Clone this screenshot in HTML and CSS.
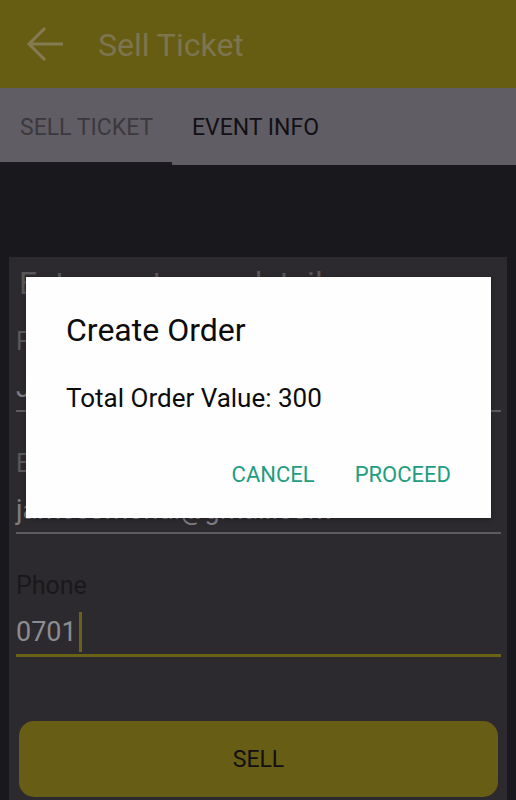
FILE: index.html
```html
<!DOCTYPE html>
<html>
<head>
<meta charset="utf-8">
<link rel="stylesheet" href="styles.css">
</head>
<body>
<div class="screen">
  <header class="appbar">
    <svg class="back" width="40" height="40" viewBox="0 0 40 40">
      <path d="M38 20H5M20 4L4 20L20 36" fill="none" stroke="#857b52" stroke-width="3" stroke-linejoin="miter"/>
    </svg>
    <div class="title">Sell Ticket</div>
  </header>
  <nav class="tabs">
    <div class="tab active">SELL TICKET</div>
    <div class="tab">EVENT INFO</div>
  </nav>
  <main class="content">
    <section class="card">
      <div class="hint">Enter customer details</div>
      <div class="field">
        <div class="label">First Name</div>
        <div class="value">James</div>
      </div>
      <div class="field">
        <div class="label">Email</div>
        <div class="value">jamesomondi@gmail.com</div>
      </div>
      <div class="field focused">
        <div class="label dark">Phone</div>
        <div class="value">0701<span class="cursor"></span></div>
      </div>
      <button class="sell">SELL</button>
    </section>
  </main>

  <div class="dialog">
    <div class="d-title">Create Order</div>
    <div class="d-body">Total Order Value: 300</div>
    <div class="d-actions">
      <span class="d-btn">CANCEL</span>
      <span class="d-btn">PROCEED</span>
    </div>
  </div>
</div>
</body>
</html>
```
FILE: styles.css
```css
* { box-sizing: border-box; }
html, body { margin: 0; padding: 0; }
body {
  width: 516px;
  height: 800px;
  overflow: hidden;
  background: #19181c;
  font-family: Roboto, "Liberation Sans", sans-serif;
}
.screen {
  position: relative;
  width: 516px;
  height: 800px;
  display: flex;
  flex-direction: column;
}
.appbar {
  flex-shrink: 0;
  height: 88px;
  background: #665c12;
  display: flex;
  align-items: center;
  padding-left: 25px;
}
.back { display: block; margin-top: 0; }
.title {
  margin-left: 33px;
  font-size: 32px;
  color: #7d7550;
  margin-top: 2px;
}
.tabs {
  flex-shrink: 0;
  height: 77px;
  background: #615d64;
  display: flex;
}
.tab {
  font-size: 23px;
  color: #121014;
  display: flex;
  align-items: center;
  padding: 0 20px;
  padding-top: 2px;
  white-space: nowrap;
}
.tab.active {
  width: 172px;
  color: #3b393d;
  border-bottom: 3px solid #1c1a1e;
  padding-top: 5px;
}
.content {
  flex: 1;
  min-height: 0;
  padding: 92px 9px 0 9px;
  display: flex;
  flex-direction: column;
}
.card {
  flex: 1;
  min-height: 0;
  overflow: hidden;
  background: #2c2a2e;
  padding: 7px 6px 0 7px;
  display: flex;
  flex-direction: column;
}
.hint {
  flex-shrink: 0;
  font-size: 32px;
  line-height: 38px;
  color: #58565b;
  padding-left: 3px;
  white-space: nowrap;
}
.field {
  flex-shrink: 0;
  margin-top: 37px;
  border-bottom: 2px solid #5d5b60;
  padding-bottom: 5px;
}
.hint + .field { margin-top: 25px; }
.field.focused {
  border-bottom: 3px solid #6a6214;
}
.label {
  font-size: 25px;
  line-height: 30px;
  color: #5a585c;
}
.label.dark { color: #19181b; }
.value {
  margin-top: 14px;
  font-size: 27px;
  line-height: 34px;
  height: 34px;
  color: #7e7c80;
  display: flex;
  align-items: center;
  white-space: nowrap;
}
.focused .value { color: #8e8c90; }
.cursor {
  display: block;
  width: 3px;
  height: 40px;
  background: #6a6214;
  margin: -3px 0 -3px 2px;
}
.sell {
  flex-shrink: 0;
  margin: 64px 3px 0 3px;
  height: 76px;
  border: none;
  border-radius: 15px;
  background: #675d14;
  font-family: Roboto, "Liberation Sans", sans-serif;
  font-size: 23px;
  color: #111013;
  padding: 0;
}
.dialog {
  position: absolute;
  left: 26px;
  top: 277px;
  width: 465px;
  height: 241px;
  background: #fefefe;
  box-shadow: 0 1px 4px rgba(0,0,0,0.3);
  padding: 33px 40px 0 40px;
  display: flex;
  flex-direction: column;
}
.d-title {
  font-size: 32px;
  line-height: 40px;
  color: #0c0c0c;
}
.d-body {
  margin-top: 32px;
  font-size: 26px;
  line-height: 32px;
  color: #0c0c0c;
}
.d-actions {
  margin-top: 47px;
  display: flex;
  justify-content: flex-end;
  gap: 40px;
}
.d-btn {
  font-size: 22px;
  line-height: 28px;
  color: #1f9d80;
}
```
